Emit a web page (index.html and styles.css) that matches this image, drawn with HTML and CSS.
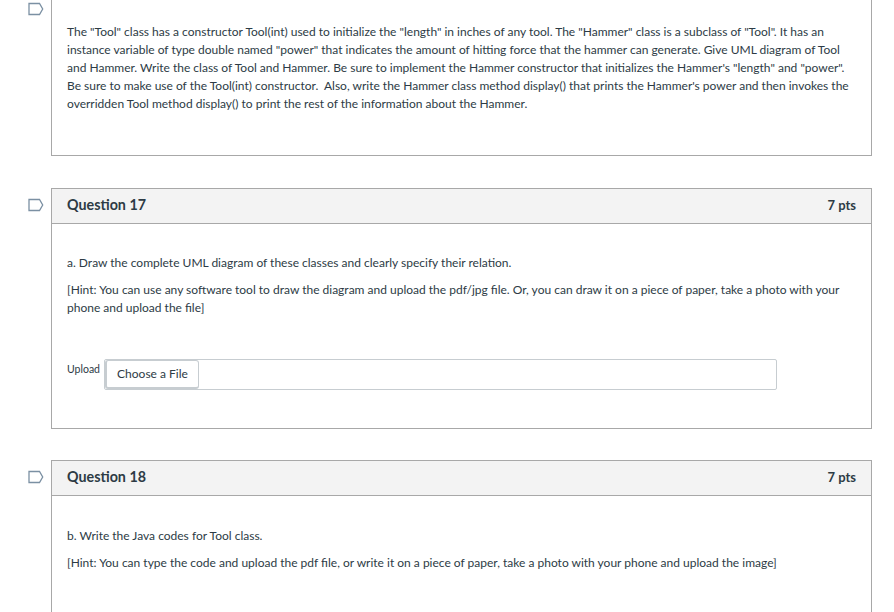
FILE: index.html
```html
<!DOCTYPE html>
<html>

<head>
    <title>Quiz</title>
    <link rel="stylesheet" href="styles.css">
</head>

<body>
    <div class="quiz">

        <div class="question first">
            <div class="flag-col">
                <svg class="flag" width="16" height="14" viewBox="0 0 16 14"><path d="M1 1.5H11.5L14.7 7L11.5 12.5H1Z" /></svg>
            </div>
            <div class="card">
                <div class="body body-first">
                    <p>The "Tool" class has a constructor Tool(int) used to initialize the "length" in inches of any tool. The "Hammer" class is a subclass of "Tool". It has an instance variable of type double named "power" that indicates the amount of hitting force that the hammer can generate. Give UML diagram of Tool and Hammer. Write the class of Tool and Hammer. Be sure to implement the Hammer constructor that initializes the Hammer's "length" and "power". Be sure to make use of the Tool(int) constructor.&nbsp; Also, write the Hammer class method display() that prints the Hammer's power and then invokes the overridden Tool method display() to print the rest of the information about the Hammer.</p>
                </div>
            </div>
        </div>

        <div class="question q17">
            <div class="flag-col">
                <svg class="flag" width="16" height="14" viewBox="0 0 16 14"><path d="M1 1.5H11.5L14.7 7L11.5 12.5H1Z" /></svg>
            </div>
            <div class="card">
                <div class="header">
                    <span class="name">Question 17</span>
                    <span class="pts">7 pts</span>
                </div>
                <div class="body body-17">
                    <p>a. Draw the complete UML diagram of these classes and clearly specify their relation.</p>
                    <p>[Hint: You can use any software tool to draw the diagram and upload the pdf/jpg file. Or, you can draw it on a piece of paper, take a photo with your phone and upload the file]</p>
                    <div class="upload">
                        <span class="upload-label">Upload</span>
                        <div class="file-input">
                            <button type="button" class="choose">Choose a File</button>
                        </div>
                    </div>
                </div>
            </div>
        </div>

        <div class="question q18">
            <div class="flag-col">
                <svg class="flag" width="16" height="14" viewBox="0 0 16 14"><path d="M1 1.5H11.5L14.7 7L11.5 12.5H1Z" /></svg>
            </div>
            <div class="card">
                <div class="header">
                    <span class="name">Question 18</span>
                    <span class="pts">7 pts</span>
                </div>
                <div class="body body-18">
                    <p>b. Write the Java codes for Tool class.</p>
                    <p>[Hint: You can type the code and upload the pdf file, or write it on a piece of paper, take a photo with your phone and upload the image]</p>
                </div>
            </div>
        </div>

    </div>
</body>

</html>
```

FILE: styles.css
```css
html,
body {
    margin: 0;
    height: 612px;
    overflow: hidden;
    background: #fff;
}

body {
    font-family: Lato, "Open Sans", sans-serif;
    font-size: 12px;
    line-height: 18px;
    color: #2d3b45;
}

.quiz {
    width: 872px;
}

.question {
    display: flex;
    margin-bottom: 32px;
}

.question.first {
    height: 156px;
}

.question.q17 {
    margin-bottom: 31px;
}

/* last card runs off the bottom of the window */
.question.q18 {
    margin-bottom: 0;
}

.flag-col {
    width: 51px;
    flex: none;
}

.flag {
    display: block;
    margin: 10px 0 0 28px;
}

.first .flag {
    margin-top: 2px;
}

.flag path {
    fill: #fff;
    stroke: #7b90a3;
    stroke-width: 1.3;
}

.card {
    flex: 1;
    border: 1px solid #a8a8a8;
}

.first .card {
    border-top: none;
}

.q18 .card {
    border-bottom: none;
}

.header {
    display: flex;
    justify-content: space-between;
    align-items: center;
    height: 34px;
    padding: 0 15px;
    background: #f3f3f3;
    border-bottom: 1px solid #a8a8a8;
}

.name {
    font-size: 14.3px;
    font-weight: 700;
    margin-top: -2px;
}

.pts {
    font-size: 13px;
    font-weight: 700;
    margin-top: -2px;
}

.body {
    padding: 0 15px;
}

.body p {
    margin: 0 0 9px;
}

.body-first {
    padding-top: 23px;
}

.body-17 {
    padding-top: 30px;
    height: 174px;
}

.body-18 {
    padding-top: 31px;
    height: 85px;
}

.upload {
    display: flex;
    align-items: flex-start;
    margin-top: 42px;
}

.upload-label {
    font-size: 10.5px;
    margin: 1px 4px 0 0;
}

.file-input {
    width: 671px;
    height: 29px;
    border: 1px solid #c7cdd1;
    border-radius: 2px;
}

.choose {
    display: block;
    height: 29px;
    width: 94px;
    padding: 0 0 2px;
    font-family: inherit;
    font-size: 12px;
    color: #2d3b45;
    background: #fff;
    border: 1px solid #c7cdd1;
    border-left-width: 2px;
    border-bottom-width: 2px;
    border-radius: 3px;
}
```
